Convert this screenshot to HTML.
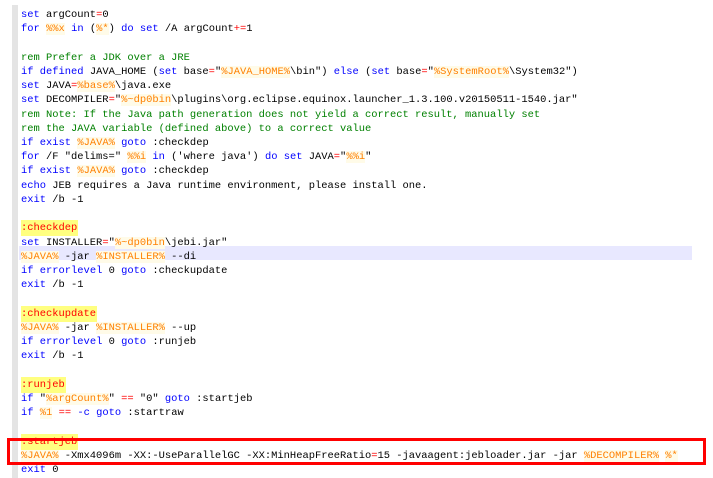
<!DOCTYPE html>
<html><head><meta charset="utf-8"><style>
html,body{margin:0;padding:0;background:#fff;width:713px;height:478px;overflow:hidden;position:relative}
.g{position:absolute;left:12px;top:5px;width:6px;height:473px;background:#e4e4e4}
.hl{position:absolute;left:19px;top:246px;width:673px;height:14px;background:#e8e8ff}
pre{position:absolute;left:21px;top:8px;margin:0;font-family:"Liberation Mono",monospace;font-size:10.43px;line-height:14.22px;color:#000;white-space:pre}
.k{color:#0000ff}.v{color:#ff8000;background:#fffbe8}.o{color:#ff0000}.c{color:#008000}
.l{color:#ff0000;background:#ffff80;padding:2px 1px 2px 0}
.box{position:absolute;left:7px;top:438px;width:693px;height:21px;border:3px solid #f00}
</style></head><body>
<div class="g"></div><div class="hl"></div>
<pre><span class="k">set</span> argCount<span class="o">=</span>0
<span class="k">for</span> <span class="v">%%x</span> <span class="k">in</span> (<span class="v">%*</span>) <span class="k">do</span> <span class="k">set</span> /A argCount<span class="o">+=</span>1

<span class="c">rem Prefer a JDK over a JRE</span>
<span class="k">if</span> <span class="k">defined</span> JAVA_HOME (<span class="k">set</span> base<span class="o">=</span>"<span class="v">%JAVA_HOME%</span>\bin") <span class="k">else</span> (<span class="k">set</span> base<span class="o">=</span>"<span class="v">%SystemRoot%</span>\System32")
<span class="k">set</span> JAVA<span class="o">=</span><span class="v">%base%</span>\java.exe
<span class="k">set</span> DECOMPILER<span class="o">=</span>"<span class="v">%~dp0bin</span>\plugins\org.eclipse.equinox.launcher_1.3.100.v20150511-1540.jar"
<span class="c">rem Note: If the Java path generation does not yield a correct result, manually set</span>
<span class="c">rem the JAVA variable (defined above) to a correct value</span>
<span class="k">if</span> <span class="k">exist</span> <span class="v">%JAVA%</span> <span class="k">goto</span> :checkdep
<span class="k">for</span> /F "delims=" <span class="v">%%i</span> <span class="k">in</span> ('where java') <span class="k">do</span> <span class="k">set</span> JAVA<span class="o">=</span>"<span class="v">%%i</span>"
<span class="k">if</span> <span class="k">exist</span> <span class="v">%JAVA%</span> <span class="k">goto</span> :checkdep
<span class="k">echo</span> JEB requires a Java runtime environment, please install one.
<span class="k">exit</span> /b -1

<span class="l">:checkdep</span>
<span class="k">set</span> INSTALLER<span class="o">=</span>"<span class="v">%~dp0bin</span>\jebi.jar"
<span class="v">%JAVA%</span> -jar <span class="v">%INSTALLER%</span> --di
<span class="k">if</span> <span class="k">errorlevel</span> 0 <span class="k">goto</span> :checkupdate
<span class="k">exit</span> /b -1

<span class="l">:checkupdate</span>
<span class="v">%JAVA%</span> -jar <span class="v">%INSTALLER%</span> --up
<span class="k">if</span> <span class="k">errorlevel</span> 0 <span class="k">goto</span> :runjeb
<span class="k">exit</span> /b -1

<span class="l">:runjeb</span>
<span class="k">if</span> "<span class="v">%argCount%</span>" <span class="o">==</span> "0" <span class="k">goto</span> :startjeb
<span class="k">if</span> <span class="v">%1</span> <span class="o">==</span> <span class="k">-c</span> <span class="k">goto</span> :startraw

<span class="l">:startjeb</span>
<span class="v">%JAVA%</span> -Xmx4096m -XX:-UseParallelGC -XX:MinHeapFreeRatio<span class="o">=</span>15 -javaagent:jebloader.jar -jar <span class="v">%DECOMPILER%</span> <span class="v">%*</span>
<span class="k">exit</span> 0</pre>
<div class="box"></div>
</body></html>
